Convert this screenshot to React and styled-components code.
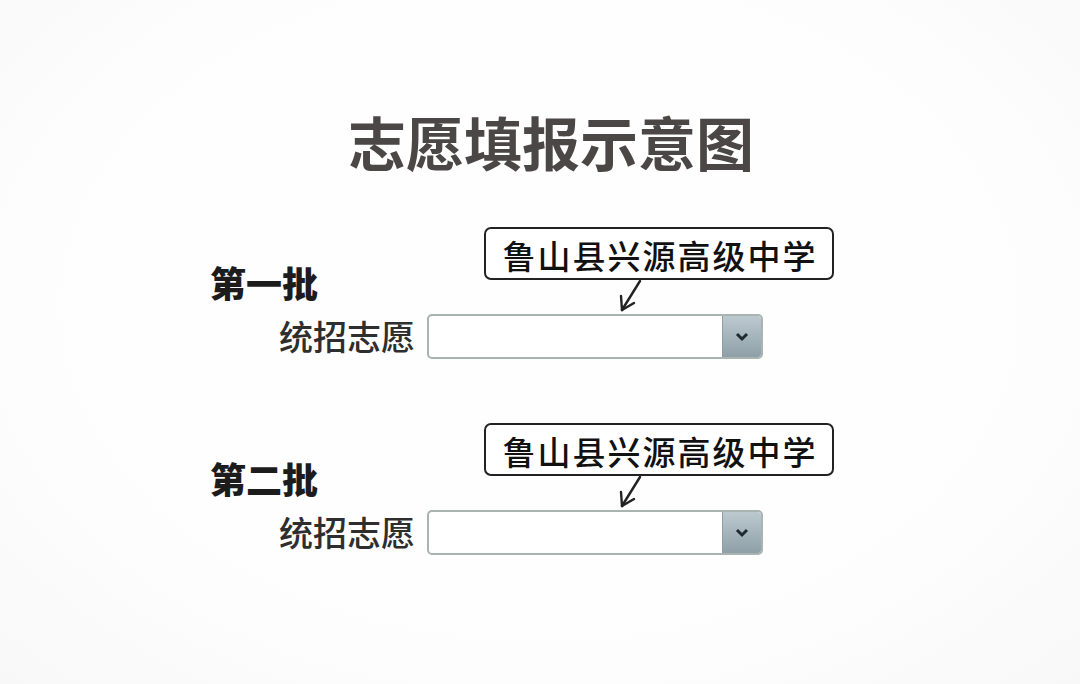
import React from 'react'
import styled, { createGlobalStyle } from 'styled-components'

const GlobalStyle = createGlobalStyle`
  html, body {
    margin: 0;
    padding: 0;
  }
  body {
    background: #fcfcfc;
    font-family: "Noto Sans CJK SC", "Noto Sans", sans-serif;
  }
`

const Page = styled.div`
  width: 1080px;
  height: 684px;
  box-sizing: border-box;
  padding-top: 112px;
  background: radial-gradient(ellipse at 50% 45%, #fefefe 60%, #f8f8f8 100%);
  display: flex;
  flex-direction: column;
  overflow: hidden;
`

const Title = styled.h1`
  margin: 0 0 0 22px;
  text-align: center;
  font-size: 58px;
  line-height: 1;
  font-weight: 700;
  color: #4b4747;
`

const Groups = styled.div`
  display: flex;
  flex-direction: column;
  gap: 65px;
  padding-left: 210px;
  margin-top: 57px;
`

const Group = styled.div`
  display: grid;
  grid-template-columns: 217px auto;
  grid-template-rows: 53px 34px 44px;
`

const BatchLabel = styled.div`
  grid-column: 1;
  grid-row: 1 / 3;
  align-self: end;
  margin-bottom: 14px;
  font-size: 36px;
  line-height: 1;
  font-weight: 900;
  color: #1c1c1c;
`

const Callout = styled.div`
  grid-column: 2;
  grid-row: 1;
  justify-self: start;
  margin-left: 57px;
  width: 350px;
  height: 53px;
  box-sizing: border-box;
  border: 2px solid #222;
  border-radius: 7px;
  background: #fff;
  display: flex;
  align-items: center;
  justify-content: center;
  padding: 3px 0 0 2px;
  font-size: 33px;
  font-weight: 500;
  letter-spacing: 2px;
  color: #111;
`

const Pointer = styled.svg`
  grid-column: 2;
  grid-row: 2;
  margin-left: 189px;
  display: block;
`

const FieldLabel = styled.div`
  grid-column: 1;
  grid-row: 3;
  justify-self: end;
  align-self: center;
  padding-right: 12px;
  font-size: 34px;
  line-height: 1;
  font-weight: 500;
  color: #2e2e2e;
`

const Select = styled.div`
  grid-column: 2;
  grid-row: 3;
  width: 336px;
  height: 45px;
  box-sizing: border-box;
  border: 2px solid #a9b3b1;
  border-radius: 5px;
  background: #fff;
  display: flex;
  justify-content: flex-end;
  overflow: hidden;
`

const SelectButton = styled.div`
  width: 38px;
  height: 100%;
  border-left: 1px solid #8f9ea4;
  background: linear-gradient(#bccad0, #8e9fa7);
  display: flex;
  align-items: center;
  justify-content: center;
`

function Arrow() {
  return (
    <Pointer width="30" height="34" viewBox="0 0 30 34">
      <g stroke="#222" strokeWidth="2.4" fill="none" strokeLinecap="round">
        <line x1="24" y1="1" x2="6" y2="30" />
        <line x1="6" y1="30" x2="5" y2="16" />
        <line x1="6" y1="30" x2="18" y2="23" />
      </g>
    </Pointer>
  )
}

function Chevron() {
  return (
    <svg width="14" height="10" viewBox="0 0 14 10">
      <path d="M2 2 L7 7 L12 2" stroke="#1d2a30" strokeWidth="3" fill="none" />
    </svg>
  )
}

const batches = ['第一批', '第二批']

export default function App() {
  return (
    <Page>
      <GlobalStyle />
      <Title>志愿填报示意图</Title>
      <Groups>
        {batches.map((name) => (
          <Group key={name}>
            <BatchLabel>{name}</BatchLabel>
            <Callout>鲁山县兴源高级中学</Callout>
            <Arrow />
            <FieldLabel>统招志愿</FieldLabel>
            <Select>
              <SelectButton>
                <Chevron />
              </SelectButton>
            </Select>
          </Group>
        ))}
      </Groups>
    </Page>
  )
}
